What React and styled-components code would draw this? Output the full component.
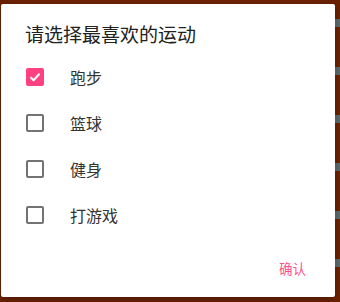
import React, { useState } from "react";
import styled, { createGlobalStyle } from "styled-components";

const Global = createGlobalStyle`
  html, body { margin: 0; padding: 0; }
  body { font-family: "Noto Sans CJK SC", "Noto Sans", Roboto, sans-serif; }
`;

const Page = styled.div`
  width: 340px;
  height: 302px;
  box-sizing: border-box;
  background-color: #6b2202;
  background-image: repeating-linear-gradient(
    to bottom,
    transparent 0px,
    transparent 19px,
    #5d6b6d 19px,
    #5d6b6d 27px,
    transparent 27px,
    transparent 48px
  );
  background-size: 6px 100%;
  background-position: right top;
  background-repeat: no-repeat;
  padding: 4px 5px 5px 1px;
  display: flex;
`;

const Dialog = styled.div`
  flex: 1;
  background: #ffffff;
  border-radius: 2px;
  box-shadow: 0 2px 6px rgba(0, 0, 0, 0.3);
  display: flex;
  flex-direction: column;
  padding: 18px 29px 0 24px;
`;

const Title = styled.div`
  font-size: 19px;
  line-height: 24px;
  color: #212121;
  margin-bottom: 8px;
`;

const List = styled.div`
  display: flex;
  flex-direction: column;
`;

const Row = styled.label`
  height: 46px;
  display: flex;
  align-items: center;
  gap: 26px;
  padding-left: 1px;
  cursor: pointer;
`;

const Box = styled.span`
  width: 18px;
  height: 18px;
  box-sizing: border-box;
  border-radius: 2px;
  border: 2px solid ${(p) => (p.$checked ? "#ff4081" : "#737373")};
  background: ${(p) => (p.$checked ? "#ff4081" : "transparent")};
  display: flex;
  align-items: center;
  justify-content: center;
  flex: none;
`;

const Label = styled.span`
  font-size: 16px;
  line-height: 20px;
  color: #333333;
`;

const Actions = styled.div`
  display: flex;
  justify-content: flex-end;
  margin-top: 20px;
`;

const Confirm = styled.button`
  border: none;
  background: none;
  padding: 0;
  font-family: inherit;
  font-size: 13.5px;
  line-height: 20px;
  color: #ff4f8d;
  cursor: pointer;
`;

const items = ["跑步", "篮球", "健身", "打游戏"];

export default function App() {
  const [checked, setChecked] = useState([true, false, false, false]);
  return (
    <>
      <Global />
      <Page>
        <Dialog>
          <Title>请选择最喜欢的运动</Title>
          <List>
            {items.map((t, i) => (
              <Row
                key={t}
                onClick={() =>
                  setChecked((c) => c.map((v, j) => (j === i ? !v : v)))
                }
              >
                <Box $checked={checked[i]}>
                  {checked[i] && (
                    <svg width="14" height="14" viewBox="0 0 14 14">
                      <path
                        d="M2.5 7.2 L5.6 10.2 L11.5 3.8"
                        fill="none"
                        stroke="#fff"
                        strokeWidth="2"
                      />
                    </svg>
                  )}
                </Box>
                <Label>{t}</Label>
              </Row>
            ))}
          </List>
          <Actions>
            <Confirm>确认</Confirm>
          </Actions>
        </Dialog>
      </Page>
    </>
  );
}
